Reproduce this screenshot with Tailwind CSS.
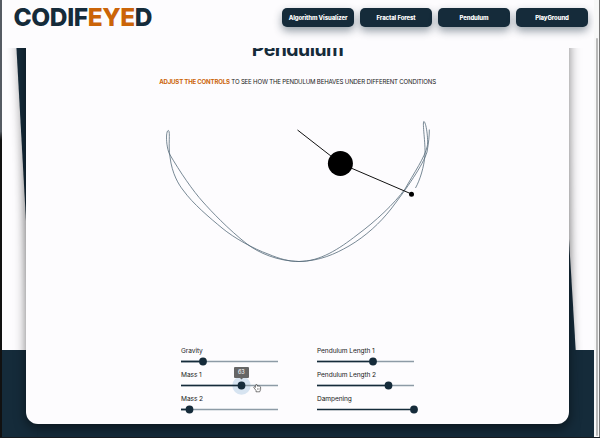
<!DOCTYPE html>
<html lang="en">
<head>
<meta charset="utf-8">
<title>Codifeyed</title>
<script src="https://cdn.jsdelivr.net/npm/@tailwindcss/browser@4"></script>
</head>
<body class="h-[438px] w-[600px] overflow-hidden bg-[#fdfcfe] font-['Inter','Noto_Sans',sans-serif] text-[#152b3a]">
<div class="relative flex h-[438px] w-[600px] flex-col overflow-hidden">
  <!-- backdrop: lower band and the tilted panel behind the card -->
  <svg class="absolute inset-0" width="600" height="438" viewBox="0 0 600 438">
    <defs><filter id="soft" x="-20%" y="-20%" width="140%" height="140%"><feGaussianBlur stdDeviation="5"/></filter></defs>
    <path d="M14 40L38 438H578L560 40Z" fill="#000" opacity=".18" filter="url(#soft)"/>
    <rect y="350" width="600" height="88" fill="#152b3a"/>
    <path d="M16 40L38 438H581L557 40Z" fill="#152b3a"/>
  </svg>
  <header class="relative z-20 flex h-12 shrink-0 items-start justify-between bg-[#fdfcfe] pr-3 pl-[13.500px]">
    <h1 class="mt-[3px] text-[24.500px] leading-[29px] font-extrabold tracking-[-0.400px]">CODIF<span class="text-[#cb6408]">EYE</span>D</h1>
    <nav class="mt-2 flex gap-1.5 text-[6px] font-extrabold tracking-[-0.120px] text-white">
      <a class="flex h-[19px] w-[72px] items-center justify-center rounded-[5px] bg-[#152b3a] whitespace-nowrap shadow-[0_4px_8px_rgba(21,43,58,0.45)]">Algorithm Visualizer</a>
      <a class="flex h-[19px] w-[72px] items-center justify-center rounded-[5px] bg-[#152b3a] shadow-[0_4px_8px_rgba(21,43,58,0.45)]">Fractal Forest</a>
      <a class="flex h-[19px] w-[72px] items-center justify-center rounded-[5px] bg-[#152b3a] shadow-[0_4px_8px_rgba(21,43,58,0.45)]">Pendulum</a>
      <a class="flex h-[19px] w-[72px] items-center justify-center rounded-[5px] bg-[#152b3a] shadow-[0_4px_8px_rgba(21,43,58,0.45)]">PlayGround</a>
    </nav>
  </header>
  <main class="relative z-10 -mt-5 ml-[26px] flex h-[396px] w-[543px] flex-col items-center rounded-[12px] bg-[#fdfcfe] pt-2 shadow-[0_4px_12px_rgba(0,0,0,0.5)]">
    <h2 class="h-6 text-[19.500px] leading-[26px] font-bold tracking-[-0.550px]">Pendulum</h2>
    <p class="mt-[17px] h-[9px] text-[6.100px] leading-[9px] tracking-[-0.190px] whitespace-nowrap text-[#222]"><b class="text-[#cb6408]">ADJUST THE CONTROLS</b> TO SEE HOW THE PENDULUM BEHAVES UNDER DIFFERENT CONDITIONS</p>
    <svg class="mt-4 h-[180px] w-[300px] shrink-0" viewBox="148 102 300 180" fill="none">
      <g stroke="#566b7a" stroke-width=".8">
        <path d="M415.500 188C420 180 424 167 425 155C425.500 143 422.300 123 423.800 121.500C426 121.500 428.500 139 427.300 146C425 157 414 173 405 189C394 204 376 221 357 235C339 249 320 261.500 299 261.500C277 261 259 253 247 244C228 229 211 211 203 202C193 191 180 172 169.500 154C166 147 165.500 130 168.500 130.500C170.500 132 168 145 170 157C172 174 179 185 183 190C193 204 210 218 222 228C234 238 254 249 268 254C280 259 289 261.500 299 261.500C320 261 335 254 349 246C366 236 380 223 391 209C407 188 423 165 427 152Q429.500 138 429.300 129.500"/>
      </g>
      <path d="M297.500 130L340.500 163.500L411.500 194" stroke="#111" stroke-width="1"/>
      <circle cx="340.400" cy="163.500" r="12.500" fill="#000"/><circle cx="411.500" cy="194.200" r="2.500" fill="#000"/>
    </svg>
    <section class="mt-[65px] grid w-[233px] grid-cols-[97px_97px] gap-x-[39px] text-[6.600px] leading-[9px] tracking-[-0.080px] text-[#1b1b1b]">
      <label class="h-6">Gravity<svg class="mt-[3px] block overflow-visible" width="97" height="4"><path d="M0 2.500H97" stroke="#8d9ba6" stroke-width="1.300"/><path d="M0 2.500H22" stroke="#152b3a" stroke-width="1.700"/><circle cx="22" cy="2.500" r="3.900" fill="#152b3a"/></svg></label>
      <label class="h-6">Pendulum Length 1<svg class="mt-[3px] block overflow-visible" width="97" height="4"><path d="M0 2.500H97" stroke="#8d9ba6" stroke-width="1.300"/><path d="M0 2.500H56" stroke="#152b3a" stroke-width="1.700"/><circle cx="56" cy="2.500" r="3.900" fill="#152b3a"/></svg></label>
      <label class="relative h-6">Mass 1<svg class="mt-[3px] block overflow-visible" width="97" height="4"><circle cx="60.500" cy="2.500" r="9.200" fill="#d7e4f1"/><path d="M0 2.500H97" stroke="#8d9ba6" stroke-width="1.300"/><path d="M0 2.500H60" stroke="#152b3a" stroke-width="1.700"/><circle cx="60.500" cy="2.500" r="3.900" fill="#152b3a"/><path d="M60.500 -3.500l-2-2h4z" fill="#666"/>
        <path d="M74.500 3.200v1.200l-1.300-.8-.5.700 2.300 3.200v1.300h3.700l.9-2.300V3.900l-1-.7-.6.300-.8-.6-.8.300V2l-1.400-.6z" fill="#fff" stroke="#292929" stroke-width=".6"/><path d="M76.600 5v2M78 5v2" stroke="#444" stroke-width=".4"/></svg>
        <span class="absolute top-[-4px] left-[52.500px] flex h-[11px] w-[15.500px] items-center justify-center rounded-[1px] bg-[#666] text-[5.500px] text-white">63</span></label>
      <label class="h-6">Pendulum Length 2<svg class="mt-[3px] block overflow-visible" width="97" height="4"><path d="M0 2.500H97" stroke="#8d9ba6" stroke-width="1.300"/><path d="M0 2.500H71.500" stroke="#152b3a" stroke-width="1.700"/><circle cx="71.500" cy="2.500" r="3.900" fill="#152b3a"/></svg></label>
      <label class="h-6">Mass 2<svg class="mt-[3px] block overflow-visible" width="97" height="4"><path d="M0 2.500H97" stroke="#8d9ba6" stroke-width="1.300"/><path d="M0 2.500H8.500" stroke="#152b3a" stroke-width="1.700"/><circle cx="8.500" cy="2.500" r="3.900" fill="#152b3a"/></svg></label>
      <label class="h-6">Dampening<svg class="mt-[3px] block overflow-visible" width="97" height="4"><path d="M0 2.500H97" stroke="#152b3a" stroke-width="1.700"/><circle cx="97" cy="2.500" r="3.900" fill="#152b3a"/></svg></label>
    </section>
  </main>
  <!-- window edges and scrollbar -->
  <div class="absolute inset-y-0 left-0 z-30 w-[1.500px] bg-linear-to-b from-[#555b63] from-30% to-[#111] to-32%"></div>
  <div class="absolute top-0 right-0 bottom-0 z-30 flex w-[6px] bg-[#f8f8f8]"><div class="mt-[38px] mb-0.5 ml-[1.500px] w-[2.500px] rounded-full bg-[#b9b9b9]"></div><div class="ml-auto w-[1px] bg-[#777]"></div></div>
  <div class="absolute inset-x-0 bottom-0 z-30 h-[1px] bg-[#161b20]"></div>
</div>
</body>
</html>
